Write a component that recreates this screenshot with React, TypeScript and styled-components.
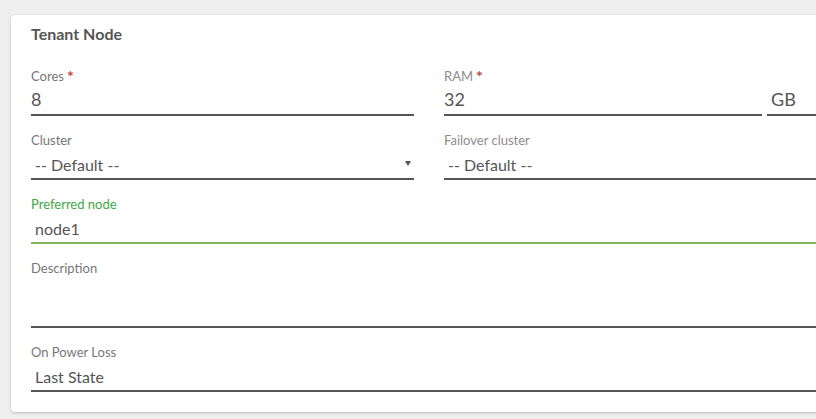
import React from "react";
import styled, { createGlobalStyle } from "styled-components";

const Global = createGlobalStyle`
  html, body { margin: 0; padding: 0; }
  body {
    background: #efefef;
    font-family: Lato, "Open Sans", sans-serif;
    overflow: hidden;
    width: 816px;
    height: 419px;
  }
`;

const Page = styled.div`
  padding: 15px 0 0 11px;
`;

const Card = styled.section`
  width: 836px;
  box-sizing: border-box;
  background: #fff;
  border-radius: 4px;
  box-shadow: 0 1px 3px rgba(0, 0, 0, 0.22);
  padding: 9px 20px 20px 20px;
`;

const Title = styled.h2`
  margin: 0;
  font-size: 16px;
  line-height: 20px;
  font-weight: 700;
  color: #555;
`;

const Grid = styled.div`
  margin-top: 24px;
  display: grid;
  grid-template-columns: 383px 383px;
  column-gap: 30px;
  row-gap: 16px;
`;

const Field = styled.div<{ $span?: boolean }>`
  display: flex;
  flex-direction: column;
  grid-column: ${(p) => (p.$span ? "1 / -1" : "auto")};
`;

const Label = styled.label<{ $tone?: "normal" | "muted" | "active" }>`
  font-size: 13px;
  line-height: 16px;
  height: 16px;
  color: ${(p) =>
    p.$tone === "active" ? "#3fa83f" : p.$tone === "muted" ? "#8c8c8c" : "#777"};
`;

const Req = styled.span`
  color: #c4443f;
  font-size: 16px;
  font-weight: 700;
  line-height: 0;
  margin-left: 3px;
  position: relative;
  top: 1px;
`;

const InputRow = styled.div`
  display: flex;
  gap: 5px;
`;

const Box = styled.div<{ $big?: boolean; $active?: boolean; $height?: number; $grow?: boolean }>`
  position: relative;
  flex: ${(p) => (p.$grow ? "1 1 0" : "none")};
  box-sizing: border-box;
  height: ${(p) => (p.$height ? p.$height : 32)}px;
  border-bottom: 2px solid ${(p) => (p.$active ? "#86b45a" : "#555")};
  color: #555;
  font-size: ${(p) => (p.$big ? 18 : 16)}px;
  line-height: ${(p) => (p.$big ? 30 : 26)}px;
  padding: ${(p) => (p.$big ? "0" : "4px 0 0 4px")};
  white-space: nowrap;
`;

const Unit = styled(Box)`
  flex: 0 0 60px;
  padding-left: 4px;
`;

const Arrow = styled.span`
  position: absolute;
  right: 3px;
  top: 13px;
  width: 0;
  height: 0;
  border-left: 3px solid transparent;
  border-right: 3px solid transparent;
  border-top: 5px solid #555;
`;

export default function App() {
  return (
    <>
      <Global />
      <Page>
        <Card>
          <Title>Tenant Node</Title>
          <Grid>
            <Field>
              <Label>
                Cores<Req>*</Req>
              </Label>
              <Box $big>8</Box>
            </Field>
            <Field>
              <Label $tone="muted">
                RAM<Req>*</Req>
              </Label>
              <InputRow>
                <Box $big $grow>32</Box>
                <Unit $big>GB</Unit>
              </InputRow>
            </Field>
            <Field>
              <Label>Cluster</Label>
              <Box>
                -- Default --
                <Arrow />
              </Box>
            </Field>
            <Field>
              <Label $tone="muted">Failover cluster</Label>
              <Box>-- Default --</Box>
            </Field>
            <Field $span>
              <Label $tone="active">Preferred node</Label>
              <Box $active>node1</Box>
            </Field>
            <Field $span>
              <Label>Description</Label>
              <Box $height={52} />
            </Field>
            <Field $span>
              <Label>On Power Loss</Label>
              <Box>Last State</Box>
            </Field>
          </Grid>
        </Card>
      </Page>
    </>
  );
}
